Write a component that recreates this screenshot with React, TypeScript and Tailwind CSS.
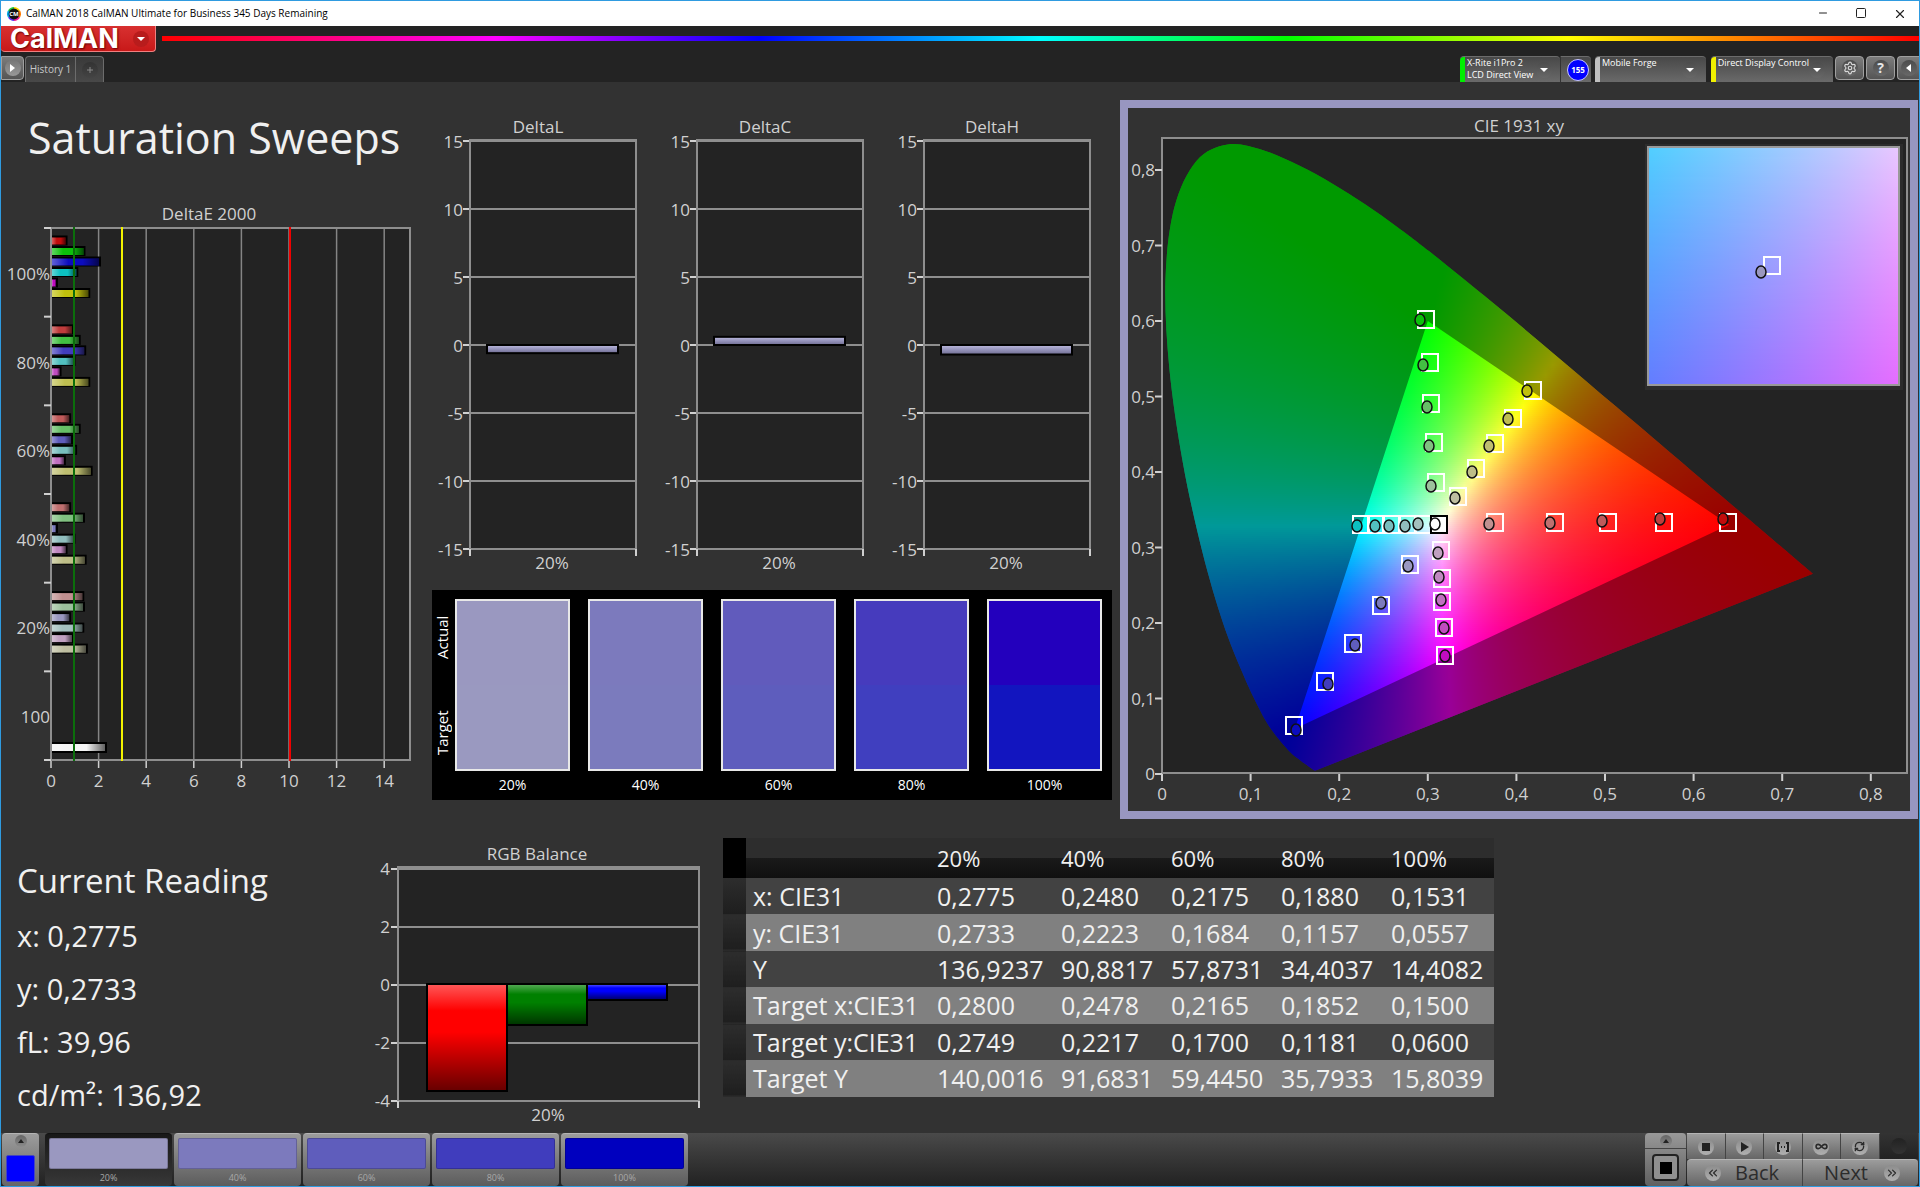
import type { ReactNode } from 'react';
import { ChevronsLeft, ChevronsRight, Infinity as InfinityIcon, Minus, RefreshCw, Settings, Square, X } from 'lucide-react';

const levels = ['20%', '40%', '60%', '80%', '100%'];

const palette = {
  red: ['#c09090', '#c07070', '#c05a5a', '#c03c3c', '#c00c0c'],
  green: ['#9cc09c', '#80c080', '#66bf66', '#42bf42', '#0cc00c'],
  blue: ['#9a98c0', '#7b7abc', '#5f5dbc', '#423dbd', '#0c0cbf'],
  cyan: ['#a4c0be', '#90bebe', '#78bebe', '#52c0c0', '#0cc0c0'],
  magenta: ['#c0a0c0', '#c088c0', '#c070c0', '#c04cc0', '#c00cc0'],
  yellow: ['#bebea0', '#bebe88', '#bebe70', '#bebe50', '#c0c00c'],
};

type Hue = keyof typeof palette;
const hues: Hue[] = ['red', 'green', 'blue', 'cyan', 'magenta', 'yellow'];

const swatches = [
  { actual: '#9a98c0', target: '#9a99c0' },
  { actual: '#7c7abd', target: '#7b7bbd' },
  { actual: '#615bbc', target: '#5e5dbd' },
  { actual: '#463bbd', target: '#403fbf' },
  { actual: '#2300bd', target: '#1215bf' },
];

/* ---------- charts ---------- */

const AXIS = '#8e8e8e';
const TICK = '#d0d0d0';

// deltaE groups from 100% down to 20%, one value per hue
const deltaE = [
  { level: 4, values: [0.65, 1.4, 2.05, 1.1, 0.25, 1.6] },
  { level: 3, values: [0.92, 1.2, 1.43, 0.98, 0.4, 1.6] },
  { level: 2, values: [0.8, 1.2, 0.88, 1.05, 0.58, 1.7] },
  { level: 1, values: [0.8, 1.38, 0.25, 0.98, 0.65, 1.45] },
  { level: 0, values: [1.35, 1.38, 0.8, 1.35, 0.92, 1.5] },
];

const DeltaEChart = () => {
  const x = (v: number) => 50 + v * 23.8;
  const rows = ['100%', '80%', '60%', '40%', '20%', '100'];
  return (
    <svg viewBox="0 0 430 610" className="block w-full" fontSize="17" fill="#d0d0d0">
      <defs>
        <linearGradient id="barX">
          <stop offset="0" stopColor="#fff" stopOpacity="0.35" />
          <stop offset="0.35" stopColor="#fff" stopOpacity="0" />
          <stop offset="0.65" stopColor="#000" stopOpacity="0" />
          <stop offset="1" stopColor="#000" stopOpacity="0.6" />
        </linearGradient>
      </defs>
      <text x="208" y="20" textAnchor="middle">DeltaE 2000</text>
      <rect x="50" y="28" width="359" height="532" fill="#232323" />
      {[2, 4, 6, 8, 10, 12, 14].map(v => (
        <line key={v} x1={x(v)} x2={x(v)} y1="28" y2="560" stroke="#858585" strokeWidth="1.5" />
      ))}
      <rect x="50" y="28" width="359" height="532" fill="none" stroke={AXIS} strokeWidth="2" />
      {[0, 1, 2, 3, 4, 5, 6].map(i => (
        <line key={i} x1="43" x2="50" y1={28 + i * 88.67} y2={28 + i * 88.67} stroke={TICK} strokeWidth="2" />
      ))}
      {rows.map((label, i) => (
        <text key={i} x="49" y={80 + i * 88.6} textAnchor="end">{label}</text>
      ))}
      {deltaE.map((group, g) =>
        group.values.map((v, i) => {
          const y = 36.5 + g * 88.9 + i * 10.5;
          return (
            <g key={`${g}-${i}`}>
              <rect x="51" y={y - 1} width={v * 23.9} height="10" fill="#000" />
              <rect x="51" y={y + 1} width={v * 23.9 - 2} height="7" fill={palette[hues[i]][group.level]} />
              <rect x="51" y={y + 1} width={v * 23.9 - 2} height="7" fill="url(#barX)" />
            </g>
          );
        })
      )}
      <rect x="51" y="542" width="55" height="11" fill="#000" />
      <rect x="51" y="544" width="53" height="7" fill="#f4f4f4" />
      <rect x="51" y="544" width="53" height="7" fill="url(#barX)" />
      <line x1="73" x2="73" y1="27" y2="561" stroke="#0b6e0b" strokeWidth="2" />
      <line x1="121" x2="121" y1="27" y2="561" stroke="#f2f200" strokeWidth="2" />
      <line x1="289" x2="289" y1="27" y2="561" stroke="#f00000" strokeWidth="2" />
      {[0, 2, 4, 6, 8, 10, 12, 14].map(v => (
        <g key={v}>
          <line x1={x(v)} x2={x(v)} y1="561" y2="568" stroke={TICK} strokeWidth="1.5" />
          <text x={x(v)} y="587" textAnchor="middle">{v}</text>
        </g>
      ))}
    </svg>
  );
};

const DeltaChart = ({ title, value }: { title: string; value: number }) => {
  const y = (v: number) => 235 - v * 13.6;
  const top = value > 0 ? y(value) : 235;
  const height = Math.abs(value) * 13.6;
  const id = `bar-${title}`;
  return (
    <svg viewBox="0 0 227 470" className="block w-full" fontSize="17" fill="#d0d0d0">
      <defs>
        <linearGradient id={id} x2="0" y2="1">
          <stop offset="0" stopColor="#b4b2d6" />
          <stop offset="0.4" stopColor="#9a98c0" />
          <stop offset="1" stopColor="#77759a" />
        </linearGradient>
      </defs>
      <text x="107" y="23" textAnchor="middle">{title}</text>
      <rect x="39" y="30" width="166" height="408" fill="#232323" />
      {[15, 10, 5, 0, -5, -10, -15].map(v => (
        <g key={v}>
          <line x1="39" x2="205" y1={y(v)} y2={y(v)} stroke={AXIS} strokeWidth="2" />
          <line x1="32" x2="39" y1={y(v)} y2={y(v)} stroke={TICK} strokeWidth="2" />
          <text x="32" y={y(v) + 7} textAnchor="end">{v}</text>
        </g>
      ))}
      <rect x="39" y="30" width="166" height="409" fill="none" stroke={AXIS} strokeWidth="2" />
      <path d="M39 439v7M205 439v7" stroke={TICK} strokeWidth="2" />
      <rect x="55" y={top - 1} width="133" height={height + 2} fill="#000" />
      <rect x="57" y={top + 1} width="129" height={height - 2} fill={`url(#${id})`} />
      <text x="121" y="459" textAnchor="middle">20%</text>
    </svg>
  );
};

const RgbBalance = () => (
  <svg viewBox="0 0 362 290" className="block w-full" fontSize="17" fill="#d0d0d0">
    <defs>
      <linearGradient id="rgbShade" x2="0" y2="1">
        <stop offset="0" stopColor="#fff" stopOpacity="0.35" />
        <stop offset="0.25" stopColor="#fff" stopOpacity="0" />
        <stop offset="0.45" stopColor="#000" stopOpacity="0" />
        <stop offset="1" stopColor="#000" stopOpacity="0.6" />
      </linearGradient>
    </defs>
    <text x="176" y="22" textAnchor="middle">RGB Balance</text>
    <rect x="37" y="30" width="301" height="232" fill="#232323" />
    {[4, 2, 0, -2, -4].map(v => (
      <g key={v}>
        <line x1="37" x2="338" y1={147 - v * 29} y2={147 - v * 29} stroke={AXIS} strokeWidth="2" />
        <line x1="30" x2="37" y1={147 - v * 29} y2={147 - v * 29} stroke={TICK} strokeWidth="2" />
        <text x="29" y={153 - v * 29} textAnchor="end">{v}</text>
      </g>
    ))}
    <rect x="37" y="29" width="301" height="234" fill="none" stroke={AXIS} strokeWidth="2" />
    <path d="M37 263v7M338 263v7" stroke={TICK} strokeWidth="2" />
    {[
      { x: 66, h: 107, color: '#ff0000' },
      { x: 146, h: 41, color: '#008000' },
      { x: 226, h: 16, color: '#0000ff' },
    ].map(bar => (
      <g key={bar.x}>
        <rect x={bar.x} y="146" width="80" height={bar.h} fill={bar.color} />
        <rect x={bar.x} y="146" width="80" height={bar.h} fill="url(#rgbShade)" stroke="#000" strokeWidth="2" />
      </g>
    ))}
    <text x="187" y="283" textAnchor="middle">20%</text>
  </svg>
);

/* ---------- CIE diagram ---------- */

const locus: [number, number][] = [
  [0.1741, 0.005], [0.1714, 0.0051], [0.1644, 0.0109], [0.1566, 0.0177], [0.144, 0.0297], [0.1241, 0.0578],
  [0.1096, 0.0868], [0.0913, 0.1327], [0.0687, 0.2007], [0.0454, 0.295], [0.0235, 0.4127], [0.0082, 0.5384],
  [0.0039, 0.6548], [0.0139, 0.7502], [0.0389, 0.812], [0.0743, 0.8338], [0.1142, 0.8262], [0.1547, 0.8059],
  [0.1929, 0.7816], [0.2296, 0.7543], [0.2658, 0.7243], [0.3016, 0.6923], [0.3731, 0.6245], [0.4441, 0.5547],
  [0.5125, 0.4866], [0.5752, 0.4242], [0.627, 0.3725], [0.6658, 0.334], [0.6915, 0.3083], [0.719, 0.2809],
  [0.7347, 0.2653],
];

const cx = (x: number) => 34 + x * 886;
const cy = (y: number) => 666 - y * 755;
const gamutPath = `M${[[0.64, 0.33], [0.3, 0.6], [0.15, 0.06]].map(([x, y]) => `${cx(x)} ${cy(y)}`).join('L')}Z`;

// smooth curve through the locus points, closed by the straight purple line
const locusPath = (() => {
  const p = locus.map(([x, y]) => [cx(x), cy(y)]);
  let d = `M${p[0].join(' ')}`;
  for (let i = 0; i < p.length - 1; i++) {
    const a = p[Math.max(0, i - 1)];
    const b = p[i];
    const c = p[i + 1];
    const e = p[Math.min(p.length - 1, i + 2)];
    d += `C${b[0] + (c[0] - a[0]) / 6} ${b[1] + (c[1] - a[1]) / 6} ${c[0] - (e[0] - b[0]) / 6} ${c[1] - (e[1] - b[1]) / 6} ${c[0]} ${c[1]}`;
  }
  return `${d}Z`;
})();

// chromaticity to the brightest linear rgb that holds it
const xyColor = (x: number, y: number) => {
  const X = x / y;
  const Z = (1 - x - y) / y;
  const rgb = [
    3.2406 * X - 1.5372 - 0.4986 * Z,
    -0.9689 * X + 1.8758 + 0.0415 * Z,
    0.0557 * X - 0.204 + 1.057 * Z,
  ].map(c => Math.max(0, c));
  const max = Math.max(...rgb);
  return `rgb(${rgb.map(c => Math.round((c / max) * 255)).join(',')})`;
};

type StripsProps = { id: string; x: number; y: number; w: number; h: number; x0: number; x1: number; y0: number; y1: number; stops: number };

// fills a rectangle with chromaticities, one gradient for every two pixel rows
const ColorStrips = ({ id, x, y, w, h, x0, x1, y0, y1, stops }: StripsProps) => {
  const rows = Array.from({ length: Math.ceil(h / 2) }, (_, i) => i);
  const cols = Array.from({ length: stops + 1 }, (_, i) => i / stops);
  return (
    <g shapeRendering="crispEdges">
      {rows.map(r => {
        const v = Math.max(0.001, y1 + ((y0 - y1) * (r * 2 + 1)) / h);
        return (
          <g key={r}>
            <linearGradient id={`${id}${r}`}>
              {cols.map(c => (
                <stop key={c} offset={c} stopColor={xyColor(x0 + (x1 - x0) * c, v)} />
              ))}
            </linearGradient>
            <rect x={x} y={y + r * 2} width={w} height="2" fill={`url(#${id}${r})`} />
          </g>
        );
      })}
    </g>
  );
};

// marker centres on the diagram, 20% first
const targets: Record<Hue, [number, number][]> = {
  red: [[367, 415], [427, 415], [480, 415], [536, 415], [600, 415]],
  green: [[308, 375], [306, 335], [303, 296], [302, 255], [298, 212]],
  blue: [[282, 457], [253, 498], [225, 536], [197, 574], [166, 618]],
  cyan: [[295, 417], [280, 417], [263, 417], [248, 417], [233, 417]],
  magenta: [[313, 443], [314, 471], [314, 494], [316, 520], [317, 548]],
  yellow: [[330, 389], [348, 361], [367, 336], [385, 311], [405, 283]],
};

const readings: Record<Hue, [number, number][]> = {
  red: [[361, 416], [422, 415], [474, 413], [532, 411], [595, 411]],
  green: [[303, 378], [301, 338], [299, 299], [295, 257], [292, 212]],
  blue: [[280, 458], [253, 495], [227, 537], [200, 576], [168, 622]],
  cyan: [[290, 416], [277, 418], [261, 418], [247, 418], [229, 418]],
  magenta: [[310, 445], [311, 469], [313, 492], [316, 520], [317, 548]],
  yellow: [[327, 390], [344, 364], [361, 338], [380, 311], [399, 283]],
};

const CieDiagram = () => (
  <svg viewBox="0 0 782 703" className="block w-full" fontSize="17" fill="#d0d0d0">
    <defs>
      <clipPath id="locus"><path d={locusPath} /></clipPath>
    </defs>
    <text x="391" y="24" textAnchor="middle">CIE 1931 xy</text>
    <rect x="34" y="30" width="745" height="635" fill="#232323" stroke={AXIS} strokeWidth="2" />
    <g clipPath="url(#locus)">
      <ColorStrips id="cie" x={34} y={34} w={664} h={632} x0={0} x1={664 / 886} y0={0} y1={632 / 755} stops={90} />
      <path d={`M0 0H782V703H0Z${gamutPath}`} fillRule="evenodd" fill="#000" fillOpacity="0.4" />
    </g>
    {[0, 1, 2, 3, 4, 5, 6, 7, 8].map(i => (
      <g key={i}>
        <path d={`M${cx(i / 10)} 666v7M27 ${cy(i / 10)}h7`} stroke={TICK} strokeWidth="2" />
        <text x={cx(i / 10)} y="692" textAnchor="middle">{i ? `0,${i}` : '0'}</text>
        <text x="27" y={cy(i / 10) + 6} textAnchor="end">{i ? `0,${i}` : '0'}</text>
      </g>
    ))}
    {hues.map(hue => targets[hue].map(([x, y]) => (
      <rect key={`${hue}${x}-${y}`} x={x - 8} y={y - 9} width="16" height="17" fill="none" stroke="#fff" strokeWidth="2" />
    )))}
    <rect x="303" y="408" width="16" height="17" fill="#fff" stroke="#000" strokeWidth="2" />
    {hues.map(hue => readings[hue].map(([x, y], i) => (
      <ellipse key={`${hue}${x}-${y}`} cx={x} cy={y} rx="5" ry="6" fill={palette[hue][i]} stroke="#111" strokeWidth="1.5" />
    )))}
    <ellipse cx="307" cy="416" rx="5" ry="6" fill="#fff" stroke="#111" strokeWidth="1.5" />
    {/* magnified view of the current reading */}
    <rect x="517" y="36" width="258" height="246" fill="#2c2c2c" />
    <ColorStrips id="inset" x={520} y={39} w={250} h={238} x0={0.253} x1={0.307} y0={0.248} y1={0.303} stops={8} />
    <rect x="520" y="39" width="251" height="238" fill="none" stroke="#999" strokeWidth="2" />
    <rect x="636" y="149" width="16" height="17" fill="none" stroke="#fff" strokeWidth="2" />
    <ellipse cx="633" cy="164" rx="5" ry="6" fill="#9a98c0" stroke="#111" strokeWidth="1.5" />
  </svg>
);

/* ---------- data ---------- */

const tableRows = [
  ['x: CIE31', '0,2775', '0,2480', '0,2175', '0,1880', '0,1531'],
  ['y: CIE31', '0,2733', '0,2223', '0,1684', '0,1157', '0,0557'],
  ['Y', '136,9237', '90,8817', '57,8731', '34,4037', '14,4082'],
  ['Target x:CIE31', '0,2800', '0,2478', '0,2165', '0,1852', '0,1500'],
  ['Target y:CIE31', '0,2749', '0,2217', '0,1700', '0,1181', '0,0600'],
  ['Target Y', '140,0016', '91,6831', '59,4450', '35,7933', '15,8039'],
];

const ReadingsTable = () => (
  <table className="h-[259px] w-full table-fixed border-collapse text-left text-[25px] leading-8 whitespace-nowrap text-[#f0f0f0]">
    <colgroup>
      <col className="w-[23px]" />
      <col className="w-[184px]" />
      <col className="w-[124px]" />
      <col />
      <col />
      <col />
    </colgroup>
    <thead>
      <tr className="h-10 bg-[linear-gradient(#2d2d2d_50%,#1a1a1a_50%,#101010)] text-[22px]">
        <th className="bg-black p-0" />
        <th className="p-0" />
        {levels.map(level => (
          <th key={level} scope="col" className="p-0 pl-[7px] font-normal">{level}</th>
        ))}
      </tr>
    </thead>
    <tbody>
      {tableRows.map(([name, ...values]) => (
        <tr key={name} className="bg-[#424242] even:bg-[#808080]">
          <td className="border-b border-[#2a2a2a] bg-linear-to-b from-[#2d2d2d] to-[#1e1e1e] p-0" />
          <th scope="row" className="p-0 pl-[7px] font-normal">{name}</th>
          {values.map(value => (
            <td key={value} className="p-0 pl-[7px]">{value}</td>
          ))}
        </tr>
      ))}
    </tbody>
  </table>
);

const SwatchPanel = () => (
  <div className="ml-px mt-[10px] flex h-[210px] bg-black pt-[9px] pr-[10px] text-white">
    <div className="flex h-[172px] w-[23px] flex-col items-start text-[15px] leading-5">
      <span className="flex flex-1 rotate-180 items-center justify-center pt-1 [writing-mode:vertical-rl]">Actual</span>
      <span className="flex flex-1 rotate-180 items-center justify-center pb-4 [writing-mode:vertical-rl]">Target</span>
    </div>
    <div className="grid flex-1 grid-cols-5 gap-[18px]">
      {swatches.map((swatch, i) => (
        <div key={levels[i]} className="text-center text-sm">
          <div className="flex h-[172px] flex-col border-2 border-[#e8e8e8]">
            <div className="flex-1" style={{ backgroundColor: swatch.actual }} />
            <div className="flex-1" style={{ backgroundColor: swatch.target }} />
          </div>
          <div className="pt-1">{levels[i]}</div>
        </div>
      ))}
    </div>
  </div>
);

/* ---------- window chrome ---------- */

const Round = ({ children, className = 'from-[#4c4c4c] to-[#686868]' }: { children?: ReactNode; className?: string }) => (
  <span className={`flex size-4 shrink-0 items-center justify-center rounded-full bg-linear-to-b ${className}`}>
    {children}
  </span>
);

const Caret = () => (
  <svg viewBox="0 0 8 4" className="h-1 w-2 fill-white"><path d="M0 0h8L4 4z" /></svg>
);

const DeviceButton = ({ color, lines, className }: { color: string; lines: string[]; className: string }) => (
  <button className={`flex h-[26px] items-center rounded-t border-t border-[#6c6c6c] bg-linear-to-b from-[#484848] to-[#6a6a6a] pr-2 ${className}`}>
    <span className="h-full w-[5px] rounded-tl" style={{ backgroundColor: color }} />
    <span className="h-full flex-1 pl-0.5 text-left text-[9px] leading-3 whitespace-nowrap text-white">
      {lines.map(line => <span key={line} className="block">{line}</span>)}
    </span>
    <Round><Caret /></Round>
  </button>
);

const toolButton = 'flex items-center justify-center rounded border border-[#a0a0a0] bg-linear-to-b from-[#7c7c7c] to-[#555]';

const TitleBar = () => (
  <div className="flex h-[25px] items-center bg-white pl-1.5 text-black">
    <svg viewBox="0 0 14 14" className="size-[14px]">
      <path d="M7 7L7 0A7 7 0 0 1 13 3.5Z" fill="#ffd800" />
      <path d="M7 7L13 3.5A7 7 0 0 1 13 10.5Z" fill="#ff7a00" />
      <path d="M7 7L13 10.5A7 7 0 0 1 7 14Z" fill="#f0188c" />
      <path d="M7 7L7 14A7 7 0 0 1 1 10.5Z" fill="#5a30f0" />
      <path d="M7 7L1 10.5A7 7 0 0 1 1 3.5Z" fill="#00a8e8" />
      <path d="M7 7L1 3.5A7 7 0 0 1 7 0Z" fill="#20c840" />
      <circle cx="7" cy="7" r="5.4" fill="#111" />
      <text x="7" y="9.2" fontSize="6" fontWeight="700" textAnchor="middle" fill="#fff">CM</text>
    </svg>
    <span className="flex-1 pl-[5px] text-[10px]">CalMAN 2018 CalMAN Ultimate for Business 345 Days Remaining</span>
    <div className="flex text-[#222]">
      <button aria-label="Minimize" className="flex w-[38px] justify-center"><Minus size={12} strokeWidth={2} /></button>
      <button aria-label="Maximize" className="flex w-[38px] justify-center"><Square size={12} strokeWidth={2} /></button>
      <button aria-label="Close" className="flex w-[39px] justify-center"><X size={14} strokeWidth={2} /></button>
    </div>
  </div>
);

const BrandBar = () => (
  <div className="flex h-[27px] items-start">
    <button className="flex h-[26px] w-[155px] items-center justify-between rounded-b border-r border-b border-[#f08080] bg-linear-to-b from-[#d83030] to-[#c81818] pr-[6px] pl-[9px] text-white">
      <span className="font-['Inter'] text-[27px] leading-6 font-bold [text-shadow:1px_1px_2px_#600]">CalMAN</span>
      <span className="flex size-4 items-center justify-center rounded-full bg-[#b81c1c]"><Caret /></span>
    </button>
    <div className="mt-2.5 ml-1.5 h-[5px] flex-1 bg-[linear-gradient(90deg,#f00,#f0f_19%,#00f_34%,#0ff_50%,#0f0_64%,#ff0_80%,#f00)]" />
  </div>
);

const ToolRow = () => (
  <div className="flex h-[29px] items-end justify-between">
    <div className="flex items-end">
      <button aria-label="Open workflow" className={`${toolButton} mb-0.5 h-6 w-[23px] rounded-l-none`}>
        <Round className="from-[#777] to-[#999]"><svg viewBox="0 0 5 8" className="h-2 w-[5px] fill-white"><path d="M0 0v8l5-4z" /></svg></Round>
      </button>
      <div className="ml-px flex h-[26px] rounded-t border-x border-t border-[#6c6c6c] bg-linear-to-b from-[#3a3a3a] to-[#484848] text-[#c8c8c8]">
        <button className="w-[50px] border-r border-[#6c6c6c] text-[10px]">History 1</button>
        <button aria-label="Add history" className="flex w-[27px] items-center justify-center text-[#8a8a8a]">
          <Round className="from-[#333] to-[#444]">
            <svg viewBox="0 0 6 6" className="size-1.5 fill-none stroke-current"><path d="M3 0v6M0 3h6" /></svg>
          </Round>
        </button>
      </div>
    </div>
    <div className="flex items-end">
      <DeviceButton color="#00f000" lines={['X-Rite i1Pro 2', 'LCD Direct View']} className="w-[100px]" />
      <button className="flex h-[26px] w-[31px] items-center justify-end rounded-tr border-t border-l border-t-[#6c6c6c] border-l-[#333] bg-linear-to-b from-[#484848] to-[#6a6a6a] pr-0.5">
        <span className="flex size-[22px] items-center justify-center rounded-full border border-[#c8c8ff] bg-[#0000ff] text-[8px] font-bold text-white">155</span>
      </button>
      <DeviceButton color="#c0c0c0" lines={['Mobile Forge']} className="ml-1 w-[111px]" />
      <DeviceButton color="#f0f000" lines={['Direct Display Control']} className="ml-[5px] w-[122px]" />
      <div className="mb-0.5 ml-0.5 flex gap-0.5">
        <button aria-label="Settings" className={`${toolButton} h-6 w-[29px] text-[#d8d8d8]`}>
          <Round><Settings size={14} strokeWidth={2} /></Round>
        </button>
        <button className={`${toolButton} h-6 w-[29px] text-sm font-bold text-[#e8e8e8]`}><Round>?</Round></button>
        <button aria-label="Collapse" className={`${toolButton} h-6 w-[22px] rounded-r-none border-r-0`}>
          <Round><svg viewBox="0 0 5 8" className="h-2 w-[5px] fill-white"><path d="M5 0v8L0 4z" /></svg></Round>
        </button>
      </div>
    </div>
  </div>
);

const patchColors = ['#9a98c0', '#7c7abd', '#5f5dbc', '#403dbd', '#0000bf'];
const dial = 'from-[#8c8c8c] to-[#b0b0b0] text-[#2a2a2a]';
const bevel = 'border-t border-[#b4b4b4] bg-linear-to-b from-[#9c9c9c] to-[#666]';

const UpArrow = () => (
  <span className="flex size-3 items-center justify-center rounded-full bg-linear-to-b from-[#666] to-[#8c8c8c]">
    <svg viewBox="0 0 6 4" className="h-1 w-1.5 fill-[#222]"><path d="M0 4h6L3 0z" /></svg>
  </span>
);

const transport = [
  { label: 'Stop', icon: <svg viewBox="0 0 8 8" className="size-2 fill-[#222]"><path d="M0 0h8v8H0z" /></svg> },
  { label: 'Play', icon: <svg viewBox="0 0 8 10" className="ml-0.5 h-2.5 w-2 fill-[#222]"><path d="M0 0v10l8-5z" /></svg> },
  { label: 'Series', icon: <svg viewBox="0 0 12 10" className="h-2.5 w-3 fill-none stroke-[#222]" strokeWidth="2"><path d="M3 1H1v8h2M9 1h2v8H9M4 5h1M7 5h1" /></svg> },
  { label: 'Continuous', icon: <InfinityIcon size={13} strokeWidth={3} /> },
  { label: 'Refresh', icon: <RefreshCw size={11} strokeWidth={3} /> },
];

const BottomBar = () => (
  <footer className="flex h-[53px] justify-between bg-linear-to-b from-[#4a4a4a] to-[#222]">
    <div className="flex pl-px">
      <button aria-label="Pattern" className={`flex w-[37px] flex-col items-center rounded pt-px ${bevel}`}>
        <UpArrow />
        <span className="mt-2 h-[27px] w-[29px] rounded-xs border border-[#4444c0] bg-[#0000ff]" />
      </button>
      <div className="ml-1.5 flex gap-0.5">
        {levels.map((level, i) => (
          <button
            key={level}
            className={`flex w-[127px] flex-col items-center rounded border-t pt-1 text-[9px] leading-3 text-[#a8a8a8] ${
              i === 0 ? 'border-[#111] bg-linear-to-b from-[#181818] to-[#383838]' : 'border-[#b4b4b4] bg-linear-to-b from-[#9c9c9c] to-[#5c5c5c]'
            }`}
          >
            <span className="mb-[3px] block h-[31px] w-[119px] rounded-xs border border-black/20" style={{ backgroundColor: patchColors[i] }} />
            {level}
          </button>
        ))}
      </div>
    </div>
    <div className="flex pr-px">
      <div className="mr-px flex w-[41px] flex-col rounded bg-linear-to-b from-[#999] to-[#606060]">
        <button aria-label="Expand" className="flex h-4 items-center justify-center border-b border-[#444]">
          <UpArrow />
        </button>
        <button aria-label="Meter" className="m-auto flex size-[27px] items-center justify-center rounded-sm border-2 border-[#222] bg-[#909090]">
          <span className="size-3 bg-black" />
        </button>
      </div>
      <div className="flex w-[231px] flex-col">
        <div className="grid h-[26px] grid-cols-6">
          {transport.map(({ label, icon }) => (
            <button key={label} aria-label={label} className={`flex items-center justify-center border-r border-r-[#444] ${bevel}`}>
              <Round className={dial}>{icon}</Round>
            </button>
          ))}
          <span className="flex items-center justify-center bg-linear-to-b from-[#333] to-[#222]"><Round className="from-[#222] to-[#333]" /></span>
        </div>
        <div className="grid flex-1 grid-cols-2 text-xl leading-6 text-[#2c2c2c]">
          <button className={`flex items-center gap-3.5 rounded-l border-r border-r-[#444] pl-[18px] ${bevel}`}>
            <Round className={dial}><ChevronsLeft size={14} /></Round>Back
          </button>
          <button className={`flex items-center justify-end gap-4 rounded-r pr-[18px] ${bevel}`}>
            Next<Round className={dial}><ChevronsRight size={14} /></Round>
          </button>
        </div>
      </div>
    </div>
  </footer>
);

export default function App() {
  return (
    <div className="flex min-h-screen flex-col border border-[#2f9be0] bg-[#323232] font-['Open_Sans',sans-serif]">
      <TitleBar />
      <header className="bg-[#232323]">
        <BrandBar />
        <ToolRow />
      </header>

      <main className="flex-1">
        <section className="grid grid-cols-[430fr_689fr_799fr] items-start">
          <div>
            <h1 className="pt-6 pb-[30px] pl-[27px] text-[43px] leading-[64px] whitespace-nowrap text-[#f0f0f0]">Saturation Sweeps</h1>
            <DeltaEChart />
          </div>
          <div className="pt-7 pr-2">
            <div className="grid grid-cols-3">
              <DeltaChart title="DeltaL" value={-0.6} />
              <DeltaChart title="DeltaC" value={0.6} />
              <DeltaChart title="DeltaH" value={-0.7} />
            </div>
            <SwatchPanel />
          </div>
          <div className="mt-[18px] mr-px border-8 border-[#9896c0]">
            <CieDiagram />
          </div>
        </section>

        <section className="grid grid-cols-[360fr_362fr_771fr_425fr] items-start pt-[19px]">
          <div className="pt-4 pl-4 text-[29px] leading-[53px] whitespace-nowrap text-[#f0f0f0]">
            <h2 className="pb-0.5 text-[33px]">Current Reading</h2>
            <p>x: 0,2775</p>
            <p>y: 0,2733</p>
            <p>fL: 39,96</p>
            <p>cd/m²: 136,92</p>
          </div>
          <RgbBalance />
          <ReadingsTable />
        </section>
      </main>

      <BottomBar />
    </div>
  );
}
